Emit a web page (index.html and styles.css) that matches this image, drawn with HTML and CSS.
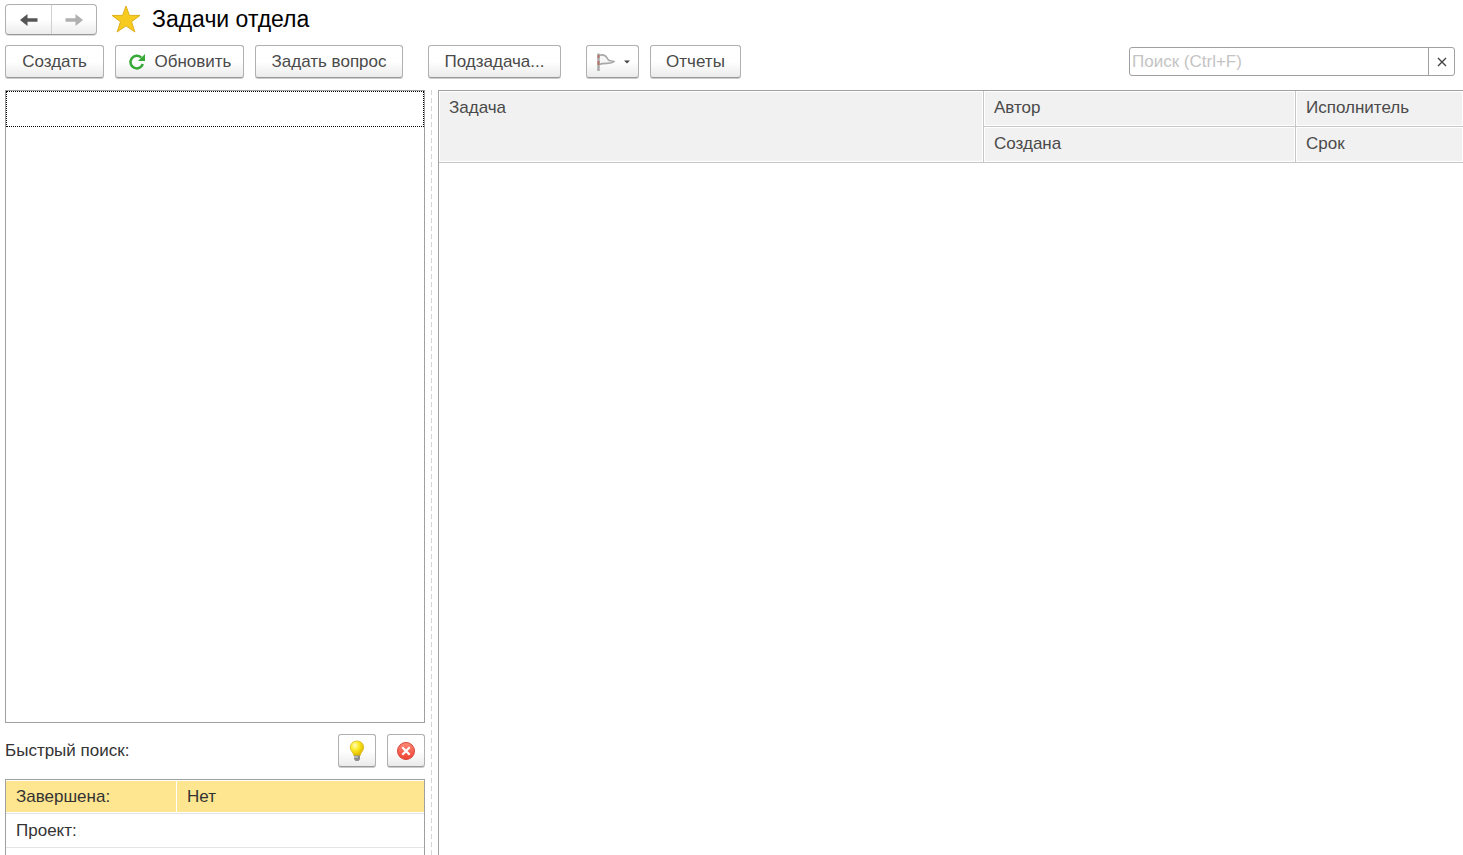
FILE: index.html
```html
<!DOCTYPE html>
<html lang="ru">
<head>
<meta charset="utf-8">
<title>Задачи отдела</title>
<link rel="stylesheet" href="styles.css">
</head>
<body>
<header class="titlebar">
  <div class="nav">
    <button class="nav-btn" type="button" aria-label="Назад">
      <svg width="18" height="14" viewBox="0 0 18 14"><path d="M0 7L7.500 1V5.200H17.500V8.800H7.500V13Z" fill="#555"/></svg>
    </button>
    <button class="nav-btn" type="button" aria-label="Вперед">
      <svg width="18" height="14" viewBox="0 0 18 14"><path d="M18 7L10.500 1V5.200H0.500V8.800H10.500V13Z" fill="#b0b0b0"/></svg>
    </button>
  </div>
  <button class="star" type="button" aria-label="В избранное">
    <svg width="30" height="28" viewBox="0 0 30 28"><path d="M15 1L18.400 10.400H29L20.500 16.700L23.900 27L15 20.800L6.100 27L9.500 16.700L1 10.400H11.600Z" fill="#f8cb20" stroke="#dfae1b"/></svg>
  </button>
  <h1 class="title">Задачи отдела</h1>
</header>

<div class="toolbar">
  <div class="group">
    <button class="btn btn-create" type="button">Создать</button>
    <button class="btn btn-refresh" type="button">
      <svg width="18" height="18" viewBox="0 0 18 18"><path d="M13.200 4.600A6.300 6.300 0 1 0 14.800 11" fill="none" stroke="#35a835" stroke-width="2.500"/><path d="M17 1V8H10Z" fill="#35a835"/></svg>
      Обновить
    </button>
    <button class="btn btn-ask" type="button">Задать вопрос</button>
  </div>
  <button class="btn btn-subtask" type="button">Подзадача...</button>
  <div class="group">
    <button class="btn btn-flag" type="button" aria-label="Флаг">
      <svg width="19" height="18" viewBox="0 0 19 18"><path d="M3 2.200C7.500 1 10.500 3 12 6.500C13.500 8.500 15.500 7.500 18 8.500C14 12 9 9 3 11.500" fill="#f6f6f6" stroke="#a8a8a8" stroke-width="1.600"/><path d="M2.500 0.500V18" stroke="#a5a5a5" stroke-width="2.400"/><path d="M2.500 2V5M2.500 8V12" stroke="#b5736a" stroke-width="2"/></svg>
      <svg width="6" height="4" viewBox="0 0 6 4"><path d="M0 0.500H6L3 3.500Z" fill="#444"/></svg>
    </button>
    <button class="btn btn-reports" type="button">Отчеты</button>
  </div>
  <div class="search">
    <input class="search-input" type="text" placeholder="Поиск (Ctrl+F)" aria-label="Поиск">
    <button class="search-clear" type="button" aria-label="Очистить">
      <svg width="10" height="10" viewBox="0 0 10 10"><path d="M1 1L9 9M9 1L1 9" stroke="#444" stroke-width="1.400"/></svg>
    </button>
  </div>
</div>

<main class="content">
  <aside class="side">
    <div class="list"><div class="list-row"></div></div>
    <div class="quick">
      <span class="quick-label">Быстрый поиск:</span>
      <button class="btn btn-icon" type="button" aria-label="Подсказка">
        <svg width="16" height="22" viewBox="0 0 16 22">
          <defs><radialGradient id="bulb" cx="0.350" cy="0.300" r="0.700"><stop offset="0" stop-color="#fffcc0"/><stop offset="0.450" stop-color="#fcea20"/><stop offset="1" stop-color="#dcb400"/></radialGradient></defs>
          <path d="M8 1C3.800 1 1.300 4 1.300 7.500C1.300 11 4.500 12.500 5 16H11C11.500 12.500 14.700 11 14.700 7.500C14.700 4 12.200 1 8 1Z" fill="url(#bulb)" stroke="#d9bd20" stroke-width="0.800"/>
          <path d="M5 15.500H11V19L9.500 21H6.500L5 19Z" fill="#8b8b8b"/><path d="M5 17H9" stroke="#ddd"/>
        </svg>
      </button>
      <button class="btn btn-icon" type="button" aria-label="Очистить поиск">
        <svg width="20" height="20" viewBox="0 0 20 20">
          <defs><linearGradient id="red" x1="0" y1="0" x2="0" y2="1"><stop offset="0" stop-color="#ff8a78"/><stop offset="1" stop-color="#f04030"/></linearGradient></defs>
          <circle cx="10" cy="10" r="8.500" fill="url(#red)" stroke="#d4473b"/><path d="M6.300 6.300L13.700 13.700M13.700 6.300L6.300 13.700" stroke="#fff" stroke-width="2.200"/>
        </svg>
      </button>
    </div>
    <table class="filters">
      <tr class="selected"><th scope="row">Завершена:</th><td>Нет</td></tr>
      <tr><th scope="row">Проект:</th><td></td></tr>
      <tr><th scope="row"></th><td></td></tr>
    </table>
  </aside>
  <div class="splitter"></div>
  <section class="tasks">
    <table class="grid">
      <colgroup><col class="col-task"><col class="col-author"><col></colgroup>
      <thead>
        <tr><th rowspan="2">Задача</th><th>Автор</th><th>Исполнитель</th></tr>
        <tr><th>Создана</th><th>Срок</th></tr>
      </thead>
    </table>
  </section>
</main>
</body>
</html>
```
FILE: styles.css
```css
* { box-sizing: border-box; }

body {
  margin: 0;
  height: 100vh;
  display: flex;
  flex-direction: column;
  overflow: hidden;
  background: #fff;
  color: #333;
  font: 17px/20px "Liberation Sans", Arial, sans-serif;
}

button, input { font: inherit; color: inherit; }
svg { display: block; flex: none; }

.titlebar {
  display: flex;
  align-items: flex-start;
  padding: 4px 5px 0;
}

.nav {
  display: flex;
  height: 31px;
  border: 1px solid #b0b0b0;
  border-bottom-color: #999;
  border-radius: 4px;
  background: linear-gradient(#fff 50%, #ececec);
  box-shadow: 0 1px 0 #ddd;
}

.nav-btn {
  width: 45px;
  padding: 0;
  border: 0;
  background: none;
  display: flex;
  align-items: center;
  justify-content: center;
}

.nav-btn + .nav-btn { border-left: 1px solid #d0d0d0; }

.star {
  margin: 1px 0 0 14px;
  padding: 0;
  border: 0;
  background: none;
}

.title {
  margin: 1px 0 0 11px;
  font-size: 23px;
  line-height: 28px;
  font-weight: normal;
  color: #000;
}

.toolbar {
  display: flex;
  align-items: flex-start;
  gap: 25px;
  padding: 10px 8px 12px 5px;
}

.group { display: flex; gap: 11px; }

.btn {
  display: flex;
  align-items: center;
  justify-content: center;
  height: 33px;
  padding: 0;
  border: 1px solid #b0b0b0;
  border-bottom-color: #999;
  border-radius: 3px;
  background: linear-gradient(#fff 50%, #ebebeb);
  box-shadow: 0 1px 0 #ccc;
  color: #4a4a4a;
  white-space: nowrap;
}

.btn-create { width: 99px; }
.btn-refresh { width: 129px; gap: 9px; }
.btn-ask { width: 148px; }
.btn-subtask { width: 133px; }
.btn-reports { width: 91px; }
.btn-flag { width: 53px; gap: 9px; }
.btn-icon { width: 38px; }

.search {
  display: flex;
  width: 326px;
  height: 29px;
  margin: 2px 0 0 auto;
  border: 1px solid #a0a0a0;
  border-radius: 3px;
}

.search-input {
  flex: 1;
  min-width: 0;
  padding: 0 2px;
  border: 0;
  background: none;
  outline: 0;
}

.search-input::placeholder { color: #c4c4c4; }

.search-clear {
  display: flex;
  align-items: center;
  justify-content: center;
  width: 26px;
  padding: 0;
  border: 0;
  border-left: 1px solid #a0a0a0;
  background: none;
}

.content {
  flex: 1;
  min-height: 0;
  display: flex;
  padding-left: 5px;
}

.side {
  flex: none;
  width: 420px;
  display: flex;
  flex-direction: column;
}

.list {
  flex: 1;
  border: 1px solid #a0a0a0;
}

.list-row { height: 36px; border: 1px dotted #000; }

.quick {
  display: flex;
  align-items: center;
  gap: 11px;
  padding: 11px 0 12px;
}

.quick-label { flex: 1; }

.filters {
  width: 100%;
  height: 76px;
  display: block;
  overflow: hidden;
  border: 1px solid #a0a0a0;
  border-bottom: 0;
  border-spacing: 0;
}

.filters tbody { display: block; }
.filters tr {
  display: flex;
  height: 34px;
  padding: 1px 0;
  border-bottom: 1px solid #e4e4e4;
}

.filters th, .filters td {
  padding: 6px 10px;
  font-weight: normal;
  text-align: left;
}

.filters th { width: 170px; }
.filters td { flex: 1; margin-left: 1px; }
.selected th, .selected td { background: #fee590; }

.splitter {
  width: 1px;
  margin: 0 6px;
  background: repeating-linear-gradient(#d4d4d4 0 5px, #fff 5px 8px);
}

.tasks {
  flex: 1;
  min-width: 0;
  border-top: 1px solid #a0a0a0;
  border-left: 1px solid #a0a0a0;
}

.grid {
  width: 100%;
  table-layout: fixed;
  border-spacing: 0;
}

.col-task { width: 545px; }
.col-author { width: 312px; }

.grid th {
  height: 36px;
  padding: 7px 10px 6px;
  vertical-align: top;
  text-align: left;
  font-weight: normal;
  color: #4a4a4a;
  background: #f1f1f1;
  border-right: 1px solid #c6c6c6;
  border-bottom: 1px solid #c6c6c6;
  box-shadow: inset 0 0 0 1px #fff;
}

.grid th:last-child { border-right: 0; }
.grid tr:first-child th:first-child { border-right: 1px solid #c6c6c6; }
```
